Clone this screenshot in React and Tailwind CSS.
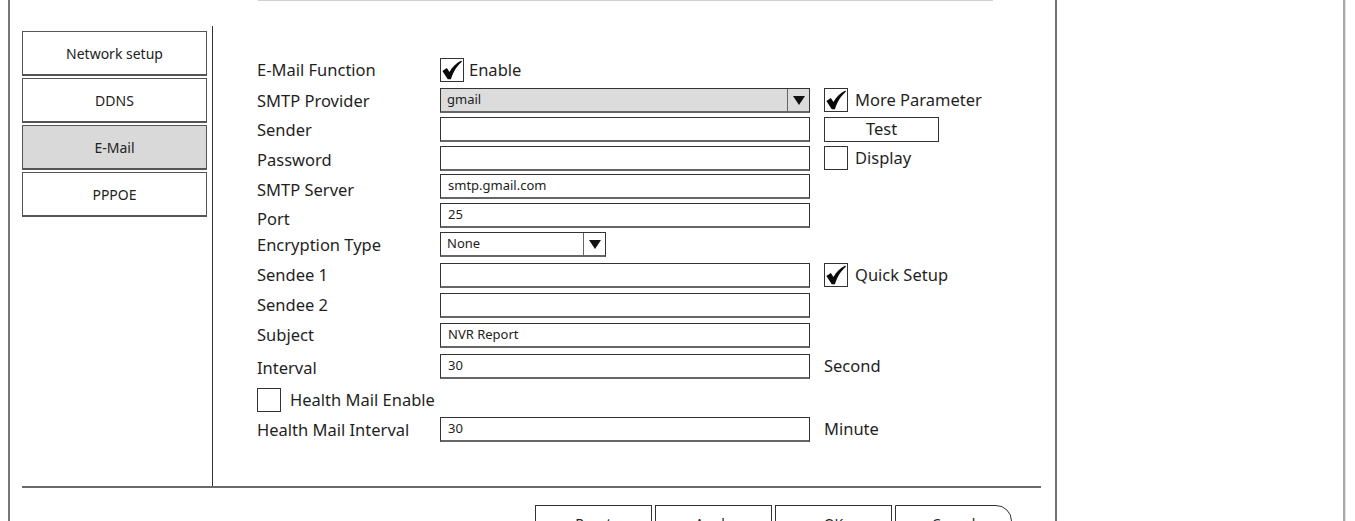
import React from "react";

const Check = () => (
  <svg viewBox="0 0 24 24" className="h-[22px] w-[22px]">
    <path
      d="M1.5 13.2 L6.4 9.8 L9.2 14.2 C12.2 8.8 16.2 4.4 22.2 1.6 L22.8 3 C17.8 7.2 13.8 13 10.8 22.2 L7.4 22.2 Z"
      fill="#0a0a0a"
    />
  </svg>
);

const Box = ({ checked }) => (
  <div className="flex h-[24px] w-[24px] shrink-0 items-center justify-center border border-[#333] bg-white">
    {checked && <Check />}
  </div>
);

const Arrow = () => (
  <svg viewBox="0 0 12 9" className="h-[9px] w-[12px]">
    <path d="M0 0 L12 0 L6 9 Z" fill="#111" />
  </svg>
);

const Input = ({ value, w = "w-[370px]" }) => (
  <div
    className={
      w +
      " flex h-[25px] items-center border border-[#333] border-b-2 border-b-[#666] bg-white px-[7px] text-[13px] text-[#222]"
    }
  >
    {value}
  </div>
);

const Select = ({ value, w, gray }) => (
  <div
    className={
      w +
      " flex h-[25px] items-stretch border border-[#333] border-b-2 border-b-[#666] text-[13px] text-[#222] " +
      (gray ? "bg-[#dcdcdc]" : "bg-white")
    }
  >
    <div className="flex flex-1 items-center px-[6px]">{value}</div>
    <div className="flex w-[22px] items-center justify-center border-l border-[#666]">
      <Arrow />
    </div>
  </div>
);

const Row = ({ label, h, lo = "", children, side }) => (
  <div className={"flex shrink-0 items-start " + h}>
    <div className={"flex h-[24px] w-[183px] shrink-0 items-center " + lo}>{label}</div>
    {children}
    {side && <div className="ml-[14px] flex items-center">{side}</div>}
  </div>
);

const Labeled = ({ checked, text }) => (
  <div className="flex items-center gap-[7px]">
    <Box checked={checked} />
    <span>{text}</span>
  </div>
);

const menu = ["Network setup", "DDNS", "E-Mail", "PPPOE"];
const buttons = ["Reset", "Apply", "OK", "Cancel"];

export default function App() {
  return (
    <div
      className="flex h-[521px] w-[1355px] overflow-hidden bg-white text-[#1f1f1f]"
      style={{ fontFamily: '"Noto Sans", "Open Sans", sans-serif' }}
    >
      <div className="w-2 shrink-0" />
      <div className="w-[2px] shrink-0 bg-[#777]" />

      <div className="flex w-[1045px] shrink-0 flex-col">
        <div className="ml-[248px] h-px w-[735px] shrink-0 bg-[#cfcfcf]" />

        <div className="mt-[25px] flex h-[460px] shrink-0 pl-[12px]">
          <div className="flex w-[185px] flex-col gap-[2px] pt-[5px]">
            {menu.map((m) => (
              <div
                key={m}
                className={
                  "flex h-[45px] items-center justify-center border border-[#555] border-b-2 text-[14px] text-[#222] " +
                  (m === "E-Mail" ? "bg-[#d9d9d9]" : "bg-white")
                }
              >
                {m}
              </div>
            ))}
          </div>
          <div className="ml-[5px] w-px bg-[#333]" />

          <div className="flex flex-col pl-[44px] pt-[32px] text-[16.5px]">
            <Row label="E-Mail Function" h="h-[30px]">
              <div className="flex items-center gap-[5px]">
                <Box checked />
                <span>Enable</span>
              </div>
            </Row>
            <Row
              label="SMTP Provider"
              h="h-[29px]"
              lo="mt-[1px]"
              side={<Labeled checked text="More Parameter" />}
            >
              <Select value="gmail" w="w-[370px]" gray />
            </Row>
            <Row
              label="Sender"
              h="h-[29px]"
              lo="mt-[1px]"
              side={
                <div className="flex h-[25px] w-[115px] items-center justify-center border border-[#333]">
                  Test
                </div>
              }
            >
              <Input />
            </Row>
            <Row
              label="Password"
              h="h-[28px]"
              lo="mt-[2px]"
              side={<Labeled text="Display" />}
            >
              <Input />
            </Row>
            <Row label="SMTP Server" h="h-[29px]" lo="mt-[4px]">
              <Input value="smtp.gmail.com" />
            </Row>
            <Row label="Port" h="h-[29px]" lo="mt-[4px]">
              <Input value="25" />
            </Row>
            <Row label="Encryption Type" h="h-[31px]" lo="mt-[1px]">
              <Select value="None" w="w-[166px]" />
            </Row>
            <Row label="Sendee 1" h="h-[30px]" side={<Labeled checked text="Quick Setup" />}>
              <Input />
            </Row>
            <Row label="Sendee 2" h="h-[30px]">
              <Input />
            </Row>
            <Row label="Subject" h="h-[31px]">
              <Input value="NVR Report" />
            </Row>
            <Row
              label="Interval"
              h="h-[34px]"
              lo="mt-[2px]"
              side={<span className="leading-[24px]">Second</span>}
            >
              <Input value="30" />
            </Row>
            <div className="flex h-[29px] shrink-0 items-start">
              <div className="flex items-center gap-[9px]">
                <Box />
                <span>Health Mail Enable</span>
              </div>
            </div>
            <Row
              label="Health Mail Interval"
              h="h-[25px]"
              lo="mt-[1px]"
              side={<span className="leading-[24px]">Minute</span>}
            >
              <Input value="30" />
            </Row>
          </div>
        </div>

        <div className="ml-[12px] h-[2px] w-[1019px] shrink-0 bg-[#6a6a6a]" />

        <div className="ml-[525px] mt-[17px] flex shrink-0 gap-[3px]">
          {buttons.map((b) => (
            <div
              key={b}
              className={
                "flex h-[40px] w-[117px] shrink-0 justify-center border border-[#333] pt-[7px] text-[14px] text-[#222] " +
                (b === "Cancel" ? "rounded-tr-[16px]" : "")
              }
            >
              {b}
            </div>
          ))}
        </div>
      </div>

      <div className="w-[2px] shrink-0 bg-[#707070]" />
      <div className="w-[286px] shrink-0" />
      <div className="w-[2px] shrink-0 bg-[#a8a8a8]" />
      <div className="w-px shrink-0 bg-[#e2e2e2]" />
    </div>
  );
}
